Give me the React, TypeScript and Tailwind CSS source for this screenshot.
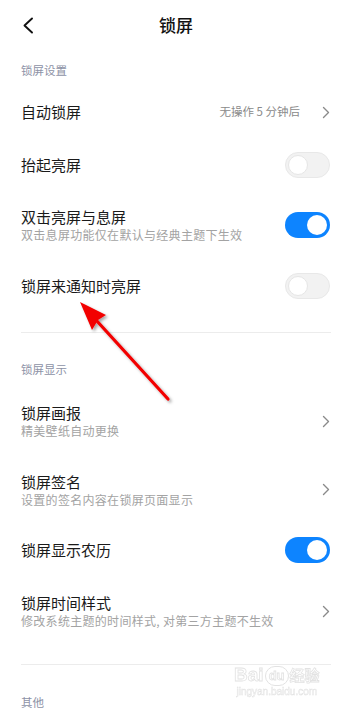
import type { ReactNode } from 'react';

const FONT = '"Noto Sans CJK SC", "Noto Sans", sans-serif';

function Chevron() {
  return (
    <svg width="8" height="13" viewBox="0 0 8 13" className="shrink-0">
      <path d="M1.5 1.5 L6.5 6.5 L1.5 11.5" fill="none" stroke="#8a8a8a" strokeWidth="1.4" strokeLinecap="round" strokeLinejoin="round" />
    </svg>
  );
}

function Toggle({ on }: { on: boolean }) {
  if (on)
    return (
      <div className="flex h-[26px] w-[45px] shrink-0 items-center justify-end rounded-full bg-[#0d84ff] px-[3px]">
        <div className="h-[20px] w-[20px] rounded-full bg-white" />
      </div>
    );
  return (
    <div className="flex h-[26px] w-[45px] shrink-0 items-center rounded-full border border-[#e8e8e8] bg-[#f2f2f2] px-[2px]">
      <div className="h-[20px] w-[20px] rounded-full border border-[#e6e6e6] bg-white" />
    </div>
  );
}

function Row({
  title,
  sub,
  h,
  right,
}: {
  title: string;
  sub?: string;
  h: string;
  right: ReactNode;
}) {
  return (
    <div className={`flex items-center justify-between pl-[21px] pr-[22px] ${h}`}>
      <div className="flex flex-col">
        <div className="text-[15px] leading-[20px] text-[#1a1a1a]">{title}</div>
        {sub && <div className="text-[12px] leading-[16px] tracking-[0.3px] text-[#a3a3a3]">{sub}</div>}
      </div>
      {right}
    </div>
  );
}

function SectionHeader({ label, pad }: { label: string; pad: string }) {
  return <div className={`px-[21px] text-[11.5px] leading-[16px] text-[#8d92a6] ${pad}`}>{label}</div>;
}

function Divider() {
  return <div className="mx-[21px] h-px bg-[#ececec]" />;
}

function RedArrow() {
  return (
    <svg className="pointer-events-none absolute left-0 top-0" width="352" height="718">
      <defs>
        <filter id="sh" x="-20%" y="-20%" width="140%" height="140%">
          <feDropShadow dx="2" dy="2" stdDeviation="1.5" floodColor="#000" floodOpacity="0.35" />
        </filter>
      </defs>
      <g filter="url(#sh)">
        <line x1="168" y1="399" x2="96" y2="320" stroke="#f20000" strokeWidth="3.2" strokeLinecap="round" />
        <path d="M80 302 L106 315 L98 320 L92 330 Z" fill="#f20000" />
      </g>
    </svg>
  );
}

function Watermark() {
  return (
    <div className="pointer-events-none absolute left-[234px] top-[664px] flex flex-col items-center opacity-60">
      <div className="flex items-end gap-[1px] text-[19px] font-bold leading-[22px] text-white [-webkit-text-stroke:0.8px_#cfcfcf]" style={{ fontFamily: '"Liberation Sans", sans-serif' }}>
        <span>Bai</span>
        <span className="flex h-[20px] w-[24px] items-center justify-center rounded-full border border-[#cfcfcf] text-[13px]">du</span>
        <span className="text-[15px]" style={{ fontFamily: FONT }}>经验</span>
      </div>
      <div className="text-[10px] leading-[12px] text-white [-webkit-text-stroke:0.5px_#cfcfcf]" style={{ fontFamily: '"Liberation Sans", sans-serif' }}>
        jingyan.baidu.com
      </div>
    </div>
  );
}

export default function App() {
  return (
    <div className="relative h-[718px] w-[352px] overflow-hidden bg-white" style={{ fontFamily: FONT }}>
      <div className="relative flex h-[50px] items-center justify-center">
        <svg className="absolute left-[22px] top-[17px]" width="12" height="17" viewBox="0 0 12 17">
          <path d="M10 1.5 L2.5 8.5 L10 15.5" fill="none" stroke="#111" strokeWidth="1.9" strokeLinecap="round" strokeLinejoin="round" />
        </svg>
        <div className="text-[17px] font-medium text-[#111]">锁屏</div>
      </div>

      <SectionHeader label="锁屏设置" pad="pt-[12px] pb-[8px]" />
      <Row
        title="自动锁屏"
        h="h-[52px]"
        right={
          <div className="flex items-center gap-[22px]">
            <span className="text-[11.5px] text-[#8a8a8a]">无操作 5 分钟后</span>
            <Chevron />
          </div>
        }
      />
      <Row title="抬起亮屏" h="h-[54px]" right={<Toggle on={false} />} />
      <Row title="双击亮屏与息屏" sub="双击息屏功能仅在默认与经典主题下生效" h="h-[66px]" right={<Toggle on />} />
      <Row title="锁屏来通知时亮屏" h="h-[56px]" right={<Toggle on={false} />} />

      <div className="pt-[18px]">
        <Divider />
      </div>
      <SectionHeader label="锁屏显示" pad="pt-[28px] pb-[10px]" />
      <Row title="锁屏画报" sub="精美壁纸自动更换" h="h-[68px]" right={<Chevron />} />
      <Row title="锁屏签名" sub="设置的签名内容在锁屏页面显示" h="h-[69px]" right={<Chevron />} />
      <Row title="锁屏显示农历" h="h-[52px]" right={<Toggle on />} />
      <Row title="锁屏时间样式" sub="修改系统主题的时间样式, 对第三方主题不生效" h="h-[70px]" right={<Chevron />} />

      <div className="pt-[18px]">
        <Divider />
      </div>
      <SectionHeader label="其他" pad="pt-[29px]" />

      <Watermark />
      <RedArrow />
    </div>
  );
}
